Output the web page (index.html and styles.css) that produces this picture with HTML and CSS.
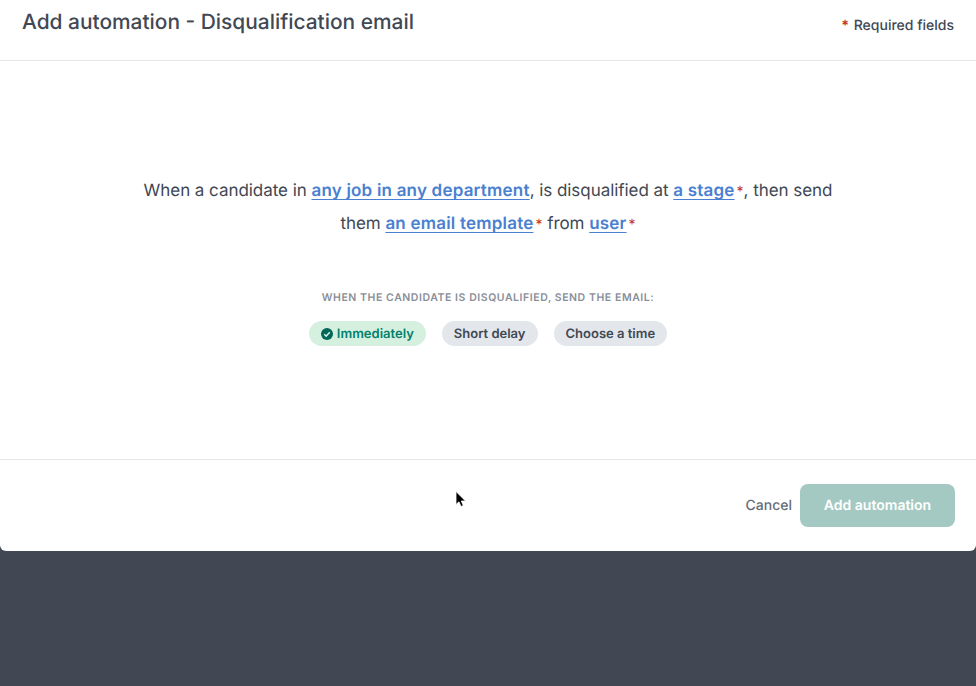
FILE: index.html
```html
<!DOCTYPE html>
<html lang="en">
<head>
<meta charset="utf-8">
<title>Add automation</title>
<link rel="stylesheet" href="styles.css">
</head>
<body>
<div class="modal">
  <header class="head">
    <h1 class="title">Add automation - Disqualification email</h1>
    <div class="req"><span class="req-star">*</span> Required fields</div>
  </header>
  <main class="main">
    <p class="sentence">When a candidate in <a class="lnk">any job in any department</a>, is disqualified at <a class="lnk">a stage</a><span class="star">*</span>, then send them <a class="lnk">an email template</a><span class="star">*</span> from <a class="lnk">user</a><span class="star">*</span></p>
    <div class="label">WHEN THE CANDIDATE IS DISQUALIFIED, SEND THE EMAIL:</div>
    <div class="pills">
      <span class="pill pill-on">
        <svg class="check" viewBox="0 0 12 12" width="12" height="12"><circle cx="6" cy="6" r="6" fill="#03665a"/><path d="M3.2 6.2 5.2 8.1 8.8 4.3" fill="none" stroke="#d5f0df" stroke-width="1.5"/></svg>
        Immediately
      </span>
      <span class="pill">Short delay</span>
      <span class="pill">Choose a time</span>
    </div>
  </main>
  <footer class="foot">
    <span class="cancel">Cancel</span>
    <span class="submit">Add automation</span>
  </footer>
</div>
<svg class="cursor" viewBox="0 0 12 18" width="12" height="18"><path d="M1 0.5V13.5L4 10.8 6 15.5 8.3 14.5 6.3 10H10.5Z" fill="#000" stroke="#fff" stroke-width=".8"/></svg>
</body>
</html>
```
FILE: styles.css
```css
* { box-sizing: border-box; }
html, body { margin: 0; height: 100%; }
body {
  background: #414853;
  font-family: Inter, "Liberation Sans", sans-serif;
  text-rendering: geometricPrecision;
  color: #414853;
  overflow: hidden;
  position: relative;
}
.modal {
  width: 976px;
  height: 551px;
  background: #fff;
  border-radius: 0 0 6px 6px;
  display: flex;
  flex-direction: column;
}
.head {
  height: 61px;
  flex: none;
  border-bottom: 1px solid #e4e6ea;
  padding: 0 22px;
  display: flex;
  justify-content: space-between;
  align-items: flex-start;
}
.title {
  margin: 10px 0 0;
  font-size: 20.9px;
  line-height: 25px;
  font-weight: 500;
}
.req {
  margin: 17px 0 0;
  font-size: 14px;
  line-height: 18px;
  font-weight: 500;
}
.req-star { color: #c7352b; font-weight: 700; margin-right: 1px; }
.main {
  flex: 1;
  padding-top: 114px;
  display: flex;
  flex-direction: column;
  align-items: center;
}
.sentence {
  margin: 0;
  width: 700px;
  text-align: center;
  font-size: 17px;
  line-height: 33px;
  letter-spacing: -0.05px;
}
.lnk {
  color: #4a80cf;
  font-weight: 600;
  letter-spacing: 0.2px;
  text-decoration: underline 1px #4a80cf;
  text-decoration-skip-ink: none;
  text-underline-offset: 3px;
}
.star { color: #c7352b; font-size: 14px; line-height: 1; margin-left: 2px; }
.label {
  margin-top: 50px;
  font-size: 10.5px;
  line-height: 14px;
  font-weight: 600;
  letter-spacing: 0.56px;
  color: #8a8f98;
}
.pills {
  margin-top: 16px;
  display: flex;
  gap: 16px;
}
.pill {
  height: 25px;
  padding: 0 12px;
  border-radius: 13px;
  background: #e3e6eb;
  font-size: 13px;
  font-weight: 600;
  display: flex;
  align-items: center;
}
.pill-on {
  background: #d5f0df;
  color: #03806c;
  gap: 4px;
}
.foot {
  height: 92px;
  flex: none;
  border-top: 1px solid #e4e6ea;
  padding: 24px 21px 0 0;
  display: flex;
  justify-content: flex-end;
  align-items: flex-start;
  gap: 8px;
}
.cancel {
  height: 43px;
  line-height: 43px;
  font-size: 14px;
  font-weight: 500;
  color: #666c76;
}
.submit {
  width: 155px;
  height: 43px;
  line-height: 43px;
  text-align: center;
  background: #a3c9c2;
  border-radius: 8px;
  color: #fff;
  font-size: 14px;
  font-weight: 600;
}
.cursor { position: absolute; left: 455px; top: 491px; }
```
